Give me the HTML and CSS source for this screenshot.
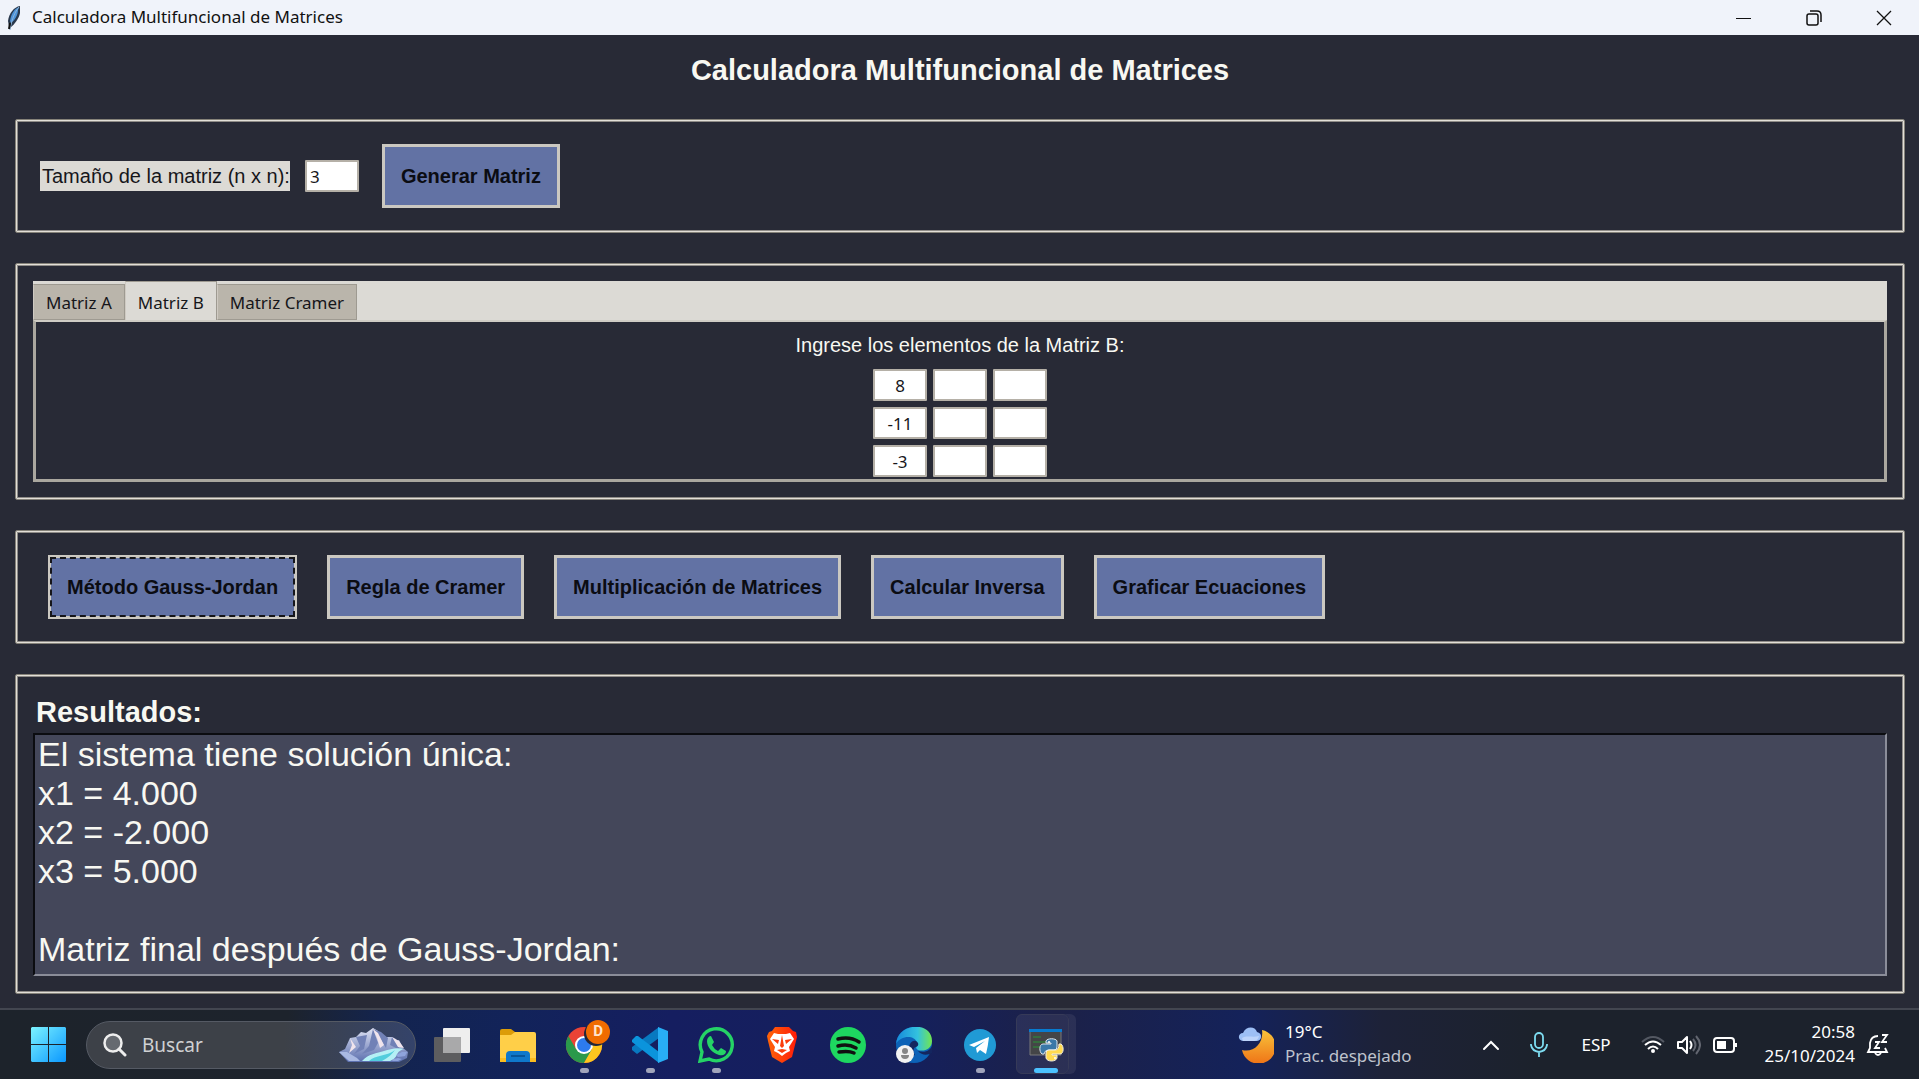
FILE: index.html
```html
<!DOCTYPE html>
<html lang="es">
<head>
<meta charset="utf-8">
<meta name="viewport" content="width=device-width, initial-scale=1">
<title>Calculadora Multifuncional de Matrices</title>
<link rel="stylesheet" href="styles.css">
</head>
<body>
<header class="titlebar">
  <svg class="feather" width="16" height="26" viewBox="0 0 16 26" aria-hidden="true">
    <path d="M14 1C8 2 3 8 2 16l1 5 2 1c4-3 8-9 9-14z" fill="#29384c"/>
    <path d="M13 2C8 4 5 9 4 16l1 2c4-3 7-8 7-13z" fill="#4d93d8"/>
    <path d="M13 2C9 7 6 13 4 25" stroke="#8fb4d8" stroke-width="1" fill="none"/>
    <path d="M4 18l-1 6" stroke="#111" stroke-width="2"/>
  </svg>
  <span class="titlebar-text">Calculadora Multifuncional de Matrices</span>
  <button class="window-control" aria-label="Minimizar"><svg width="16" height="16"><path d="M0 8.500h15" stroke="#111" /></svg></button>
  <button class="window-control" aria-label="Restaurar"><svg width="16" height="16" fill="none" stroke="#111" stroke-width="1.500"><rect x="1" y="4" width="11" height="11" rx="2"/><path d="M4 1h7q4 0 4 4v7"/></svg></button>
  <button class="window-control" aria-label="Cerrar"><svg width="16" height="16" fill="none" stroke="#111" stroke-width="1.300"><path d="M1 1l14 14M15 1L1 15"/></svg></button>
</header>

<main class="app">
  <h1 class="app-title">Calculadora Multifuncional de Matrices</h1>

  <form class="frame size-frame">
    <label class="size-label" for="size">Tamaño de la matriz (n x n):</label>
    <input class="entry size-entry" id="size" type="text" value="3">
    <button class="action" type="button">Generar Matriz</button>
  </form>

  <section class="frame matrix-frame">
    <div class="tabs" role="tablist">
      <button class="tab" role="tab" aria-selected="false">Matriz A</button>
      <button class="tab tab-active" role="tab" aria-selected="true">Matriz B</button>
      <button class="tab" role="tab" aria-selected="false">Matriz Cramer</button>
    </div>
    <div class="pane" role="tabpanel">
      <p class="pane-title">Ingrese los elementos de la Matriz B:</p>
      <div class="matrix">
        <input class="entry cell" type="text" aria-label="Fila 1, columna 1" value="8">
        <input class="entry cell" type="text" aria-label="Fila 1, columna 2">
        <input class="entry cell" type="text" aria-label="Fila 1, columna 3">
        <input class="entry cell" type="text" aria-label="Fila 2, columna 1" value="-11">
        <input class="entry cell" type="text" aria-label="Fila 2, columna 2">
        <input class="entry cell" type="text" aria-label="Fila 2, columna 3">
        <input class="entry cell" type="text" aria-label="Fila 3, columna 1" value="-3">
        <input class="entry cell" type="text" aria-label="Fila 3, columna 2">
        <input class="entry cell" type="text" aria-label="Fila 3, columna 3">
      </div>
    </div>
  </section>

  <section class="frame actions-frame">
    <button class="action action-focused">Método Gauss-Jordan</button>
    <button class="action">Regla de Cramer</button>
    <button class="action">Multiplicación de Matrices</button>
    <button class="action">Calcular Inversa</button>
    <button class="action">Graficar Ecuaciones</button>
  </section>

  <section class="frame results-frame">
    <label class="results-title" for="results">Resultados:</label>
    <textarea class="results" id="results" readonly>El sistema tiene solución única:
x1 = 4.000
x2 = -2.000
x3 = 5.000

Matriz final después de Gauss-Jordan:</textarea>
  </section>
</main>

<footer class="taskbar">
  <button class="task start" aria-label="Inicio">
    <svg width="36" height="36" viewBox="0 0 36 36"><defs><linearGradient id="win" x1="0" y1="0" x2="1" y2="1"><stop offset="0" stop-color="#7cf3ff"/><stop offset="1" stop-color="#0a97ff"/></linearGradient></defs><path d="M1 0h16v17H0V1zM18 0h16l1 1v16H18zM0 18h17v17H1l-1-1zM18 18h17v16l-1 1H18z" fill="url(#win)"/></svg>
  </button>
  <label class="search">
    <svg width="24" height="24" viewBox="0 0 24 24" fill="none" stroke="#eee" aria-hidden="true"><circle cx="10" cy="10" r="8.500" stroke-width="2.500" fill="#666a70"/><path d="M16 16l6 6" stroke-width="3" stroke-linecap="round"/></svg>
    <input class="search-input" type="text" placeholder="Buscar" aria-label="Buscar">
    <svg width="72" height="34" viewBox="0 0 72 34" aria-hidden="true">
      <defs><linearGradient id="peak" x1="0" y1="0" x2="0" y2="1"><stop offset="0" stop-color="#dfe3f4"/><stop offset="1" stop-color="#5b6fae"/></linearGradient></defs>
      <path d="M1 24l6-3 5-11 6-1 5-5 5 1 7-5 5 3 4 7 6-1 4 0 3 4 4-1 4 8 5 4-1 6-8 4H10z" fill="url(#peak)"/>
      <path d="M18 9l4 9-6 8 10-5 3-14zM35 1l-4 17-7 8 12-4 4-7zM35 1l8 11 5 8 2-10-7-6zM54 9l-2 8 10 5-4-11z" fill="#7181b6"/>
      <path d="M35 1l4 9 3 10 4-3-6-12zM12 10l2 7-3 8 7-6zM54 9l6 10 6 1-5-7z" fill="#f0e4ec"/>
      <path d="M1 24l8 0 10 6 3 3H11z" fill="#a9b9e2"/>
      <path d="M24 33c6-7 15-8 22-10 6-2 13-4 20-2-10 3-4 8-14 12z" fill="#b5f0f5"/>
      <path d="M31 33c6-6 19-5 26-11-3 4-7 8-13 11z" fill="#52cddd"/>
      <path d="M58 27l6-3 5 0-2 4-7 1zM55 31l5-1 4 1-4 2h-6z" fill="#8fa4dc"/>
    </svg>
  </label>
  <nav class="apps" aria-label="Aplicaciones">
    <button class="task" aria-label="Vista de tareas"><svg width="36" height="36"><rect x="9" y="1" width="27" height="25" rx="1" fill="#eee"/><rect x="0" y="10" width="27" height="25" rx="1" fill="#5d5d5f"/><path d="M9 10h18v16H9z" fill="#a9a9aa"/></svg></button>
    <button class="task" aria-label="Explorador de archivos"><svg width="36" height="36"><path d="M0 4q0-2 2-2h9l4 3v8H0z" fill="#dc9c08"/><path d="M0 8h11l4-3h19q2 0 2 2v28H0z" fill="#ffcf48"/><path d="M0 31h36v4H0z" fill="#fbbd20"/><path d="M6 35V28q0-4 4-4h16q4 0 4 4v7z" fill="#0f78cb"/><path d="M11 29h14" stroke="#07569b" stroke-width="2"/></svg></button>
    <button class="task running" aria-label="Google Chrome"><svg class="overflowing" width="36" height="36" viewBox="0 0 36 36"><circle cx="18" cy="18" r="18" fill="#ea4335"/><path d="M2.400 9A18 18 0 0 0 18 36l8-13-16-1z" fill="#2a994b"/><path d="M18 9h15.600A18 18 0 0 1 18 36l8-14z" fill="#fcc61f"/><circle cx="18" cy="18" r="9" fill="#fff"/><circle cx="18" cy="18" r="7" fill="#2d7bed"/><circle cx="30" cy="7" r="12" fill="#222638"/><circle cx="32" cy="5" r="12" fill="#f06c00"/></svg><span class="badge">D</span></button>
    <button class="task running" aria-label="Visual Studio Code"><svg width="36" height="36" viewBox="0 0 36 36"><path d="M27 0v11L5 27l-5-4v-3z" fill="#0879c0"/><path d="M0 13l4-4h2l21 16v11L0 15z" fill="#0b94dc"/><path d="M26 0l10 4v28l-10 4z" fill="#28aef5"/></svg></button>
    <button class="task running" aria-label="WhatsApp"><svg width="36" height="36" viewBox="0 0 36 36"><path d="M2 34l2-9A16 16 0 1 1 11 32z" fill="none" stroke="#25d366" stroke-width="3.400"/><path d="M13 9l3 6-2 3q2 4 6 6l3-3 5 3c0 4-4 5-7 4C14 26 9 20 9 14c0-3 2-5 4-5z" fill="#25d366"/></svg></button>
    <button class="task" aria-label="Brave"><svg width="32" height="36" viewBox="0 0 32 36"><defs><linearGradient id="brave"><stop stop-color="#ff6508"/><stop offset="1" stop-color="#ff1b09"/></linearGradient></defs><path d="M9 0h14l4 4 3 1 1 5-1 4-4 16-10 6-10-6L2 14 1 9l2-4 3-1z" fill="url(#brave)"/><path d="M8 6l4 1h8l4-1 4 6-5 8 1 4-4 2-4 3-4-3-4-2 1-4-5-8z" fill="#fff"/><path d="M6 12l7 1-1 4zM26 12l-7 1 1 4zM16 8l2 11-2 2-2-2zM11 23l5-1 5 1-5 3z" fill="#fb3d0b"/></svg></button>
    <button class="task" aria-label="Spotify"><svg width="36" height="36" viewBox="0 0 36 36"><circle cx="18" cy="18" r="18" fill="#1ed760"/><path d="M8 12c8-2 15-1 21 3M8 19c7-2 13-1 18 2M9 25c6-1 11-1 15 1" stroke="#111" stroke-width="3.500" stroke-linecap="round" fill="none"/></svg></button>
    <button class="task" aria-label="Microsoft Edge"><svg width="36" height="36" viewBox="0 0 36 36"><defs><linearGradient id="edge"><stop stop-color="#1689da"/><stop offset=".6" stop-color="#33c2df"/><stop offset="1" stop-color="#72e64f"/></linearGradient></defs><circle cx="18" cy="18" r="18" fill="#0c62b7"/><path d="M0 17C2-5 36-6 36 14c0 8-8 11-14 9-4-2 0-4-1-7C19 8 5 8 0 17z" fill="url(#edge)"/><path d="M22 16c-3-5-9-1-9 5 0 6 3 8 6 7-3-4-1-8 1-8q3-1 2-4zM36 16c1 5-5 11-14 8 4 5 10 4 14 2z" fill="#14265f"/><circle cx="9" cy="27" r="9" fill="#f2f2f2"/><circle cx="9" cy="24" r="3" fill="#858585"/><path d="M5 28h8q0 4-4 4t-4-4z" fill="#858585"/></svg></button>
    <button class="task running" aria-label="Telegram"><svg width="32" height="32" viewBox="0 0 32 32"><circle cx="16" cy="16" r="16" fill="#209ad5"/><path d="M5 16l20-8q-1 9-3 17l-6-4-3 3-1-5 9-7-11 6z" fill="#fff"/></svg></button>
    <button class="task task-active" aria-label="Python"><svg width="36" height="36" viewBox="0 0 36 36"><path d="M2 3h31v25H2z" fill="#444547" stroke="#78797b"/><path d="M1 2h33v3H1z" fill="#087bd0"/><path d="M5 10h8M5 15h13M5 20h7" stroke="#299536"/><path d="M16 27h-2c-3-2-3-10 1-10h8v-1h-5v-2c1-3 10-3 11 0v6q0 3-3 3h-6q-3 0-4 4z" fill="#3b78a8" stroke="#dce6ee"/><path d="M31 17h2c3 2 3 10-1 10h-8v1h5v3c-1 4-10 4-11 0v-5q0-3 3-3h6q4 0 4-6z" fill="#ffda50" stroke="#f2efe0"/><circle cx="21" cy="15" r="1" fill="#fff"/><circle cx="27" cy="31" r="1" fill="#fff"/></svg></button>
  </nav>

  <button class="weather">
    <svg width="36" height="36" viewBox="0 0 36 36" aria-hidden="true"><defs><linearGradient id="moon" x1="0" y1="0" x2="0" y2="1"><stop stop-color="#f8c43b"/><stop offset="1" stop-color="#ef7417"/></linearGradient></defs><path d="M24 3A17 17 0 1 1 4 23C16 26 26 16 24 3z" fill="url(#moon)"/><path d="M5 14C-1 13 0 6 5 6c3-7 12-7 14-1 6 1 5 9 0 9z" fill="#9dbff5"/><path d="M4 11c5-3 11 0 17-2-1 4-3 5-6 5H5z" fill="#bdd4fb"/></svg>
    <span class="two-lines"><span>19°C</span><span class="dim">Prac. despejado</span></span>
  </button>
  <div class="tray">
    <button class="tray-button" aria-label="Mostrar iconos ocultos"><svg width="18" height="12"><path d="M2 10l7-7 7 7" fill="none" stroke="#fff" stroke-width="2" stroke-linecap="round"/></svg></button>
    <button class="tray-button" aria-label="Micrófono"><svg width="18" height="26" fill="none" stroke="#7ddcf0" stroke-width="1.800"><rect x="5" y="1" width="8" height="15" rx="4"/><path d="M1 12v1q1 6 8 7 7-1 8-7v-1M9 20v5"/></svg></button>
    <button class="tray-button language">ESP</button>
    <button class="tray-button status" aria-label="Red, volumen y batería">
      <svg width="24" height="24" fill="none" stroke="#fff" stroke-width="2"><path d="M1 9q11-10 22 0" stroke="#535862"/><path d="M4 12q8-7 16 0M7 16q5-5 10 0"/><circle cx="12" cy="18" r="1"/></svg>
      <svg width="24" height="24" fill="none" stroke="#fff" stroke-width="2"><path d="M1 9h4l5-5v16l-5-5H1z" stroke-linejoin="round"/><path d="M13 8q3 4 0 8"/><path d="M16 6q5 6 0 12M19 3q8 9 0 18" stroke="#626670"/></svg>
      <svg width="24" height="24" fill="none" stroke="#fff" stroke-width="2"><rect x="1" y="5" width="20" height="14" rx="3"/><path d="M4 8h9v8H4z" fill="#fff" stroke="none"/><path d="M23 10v4"/></svg>
    </button>
    <button class="clock two-lines"><span>20:58</span><span>25/10/2024</span></button>
    <button class="tray-button bell" aria-label="Notificaciones"><svg width="24" height="24" viewBox="0 0 24 24" fill="none" stroke="#fff" stroke-width="1.800"><path d="M12 3Q5 3 4 10v5l-2 4h19l-2-4M9 20q3 4 6 0M9 9h4l-4 6h5M16 2h5l-5 7h5"/></svg></button>
  </div>
</footer>
</body>
</html>
```

FILE: styles.css
```css
* { box-sizing: border-box; }

body {
  margin: 0;
  min-height: 100vh;
  display: flex;
  flex-direction: column;
  background: #282a36;
  color: #f8f8f2;
  font-family: "Liberation Sans", Arial, sans-serif;
}

button, input, textarea { font: inherit; color: inherit; margin: 0; }
button { background: none; border: 0; padding: 0; }
svg { display: block; flex: none; }

/* Window title bar */
.titlebar {
  display: flex;
  align-items: center;
  height: 35px;
  padding-left: 6px;
  background: #f0f3fa;
  color: #111;
  font: 17px/24px "Noto Sans", sans-serif;
}
.titlebar-text { flex: 1; padding: 0 0 2px 10px; }
.window-control {
  display: grid;
  place-items: center;
  width: 70px;
  height: 35px;
}

/* Application */
.app {
  flex: 1;
  display: flex;
  flex-direction: column;
  gap: 30px;
  padding: 18px 14px 14px 15px;
}
.app-title {
  margin: 0;
  padding-bottom: 2px;
  font-size: 29px;
  line-height: 34px;
  text-align: center;
}
.frame {
  border: 1px solid #858279;
  border-radius: 2px;
  box-shadow: inset 0 0 0 1px #e2dfd8, inset 0 0 0 2px #8f8c88;
}

.size-frame, .actions-frame {
  display: flex;
  align-items: center;
  padding: 24px;
}
.size-label {
  padding: 0 0 0 2px;
  background: #dcdad5;
  color: #16161a;
  font-size: 20px;
  line-height: 30px;
}
.entry {
  width: 54px;
  height: 32px;
  padding: 0 3px;
  border: 2px solid #b5b0a7;
  border-radius: 1px;
  background: #fff;
  color: #16161a;
  font: 17px/24px "Noto Sans", sans-serif;
}
.size-entry { margin: 0 23px 0 15px; }
.action {
  height: 64px;
  padding: 0 16px;
  border: 3px solid #cbc8c1;
  background: #6272a4;
  color: #0b0c12;
  font-size: 20px;
  font-weight: bold;
}
.actions-frame { gap: 30px; padding-left: 32px; }
.action-focused { outline: 2px dashed #16161a; outline-offset: -4px; }

/* Notebook */
.matrix-frame { padding: 17px; }
.tabs {
  display: flex;
  align-items: flex-end;
  height: 39px;
  background: #dcdad5;
}
.tab {
  height: 36px;
  padding: 2px 12px 0;
  border: 1px solid #9e9a91;
  border-left-color: #cfcac2;
  background: #bab5ab;
  color: #16161a;
  font: 17px/24px "Noto Sans", sans-serif;
}
.tab-active {
  height: 39px;
  padding-top: 4px;
  background: #dcdad5;
  border-bottom: 0;
}
.pane {
  padding: 10px 0 2px;
  border: 3px solid #aaa79f;
  border-top: 2px solid #cfccc5;
}
.pane-title {
  margin: 0 0 11px;
  font-size: 20px;
  line-height: 26px;
  text-align: center;
}
.matrix {
  display: grid;
  grid-template-columns: repeat(3, 54px);
  justify-content: center;
  gap: 6px;
}
.cell { text-align: center; }

/* Results */
.results-frame {
  flex: 1;
  display: flex;
  flex-direction: column;
  padding: 18px 17px 17px;
}
.results-title {
  padding: 0 0 2px 3px;
  font-size: 29px;
  font-weight: bold;
  line-height: 38px;
}
.results {
  flex: 1;
  width: 100%;
  min-height: 243px;
  padding: 0 3px;
  border: 2px solid;
  border-color: #0b0c10 #8b8d99 #8b8d99 #0b0c10;
  background: #44475a;
  font-size: 34px;
  line-height: 39px;
  resize: none;
  overflow: hidden;
  outline: none;
}

/* Taskbar */
.taskbar {
  display: flex;
  align-items: stretch;
  height: 71px;
  padding-left: 16px;
  border-top: 2px solid #434650;
  background: linear-gradient(90deg, #1d232b 0, #1d232c 15%, #13244f 20%, #12235a 27%, #151e60 35%, #15205b 48%, #1c2148 55%, #14225a 65%, #1d2238 72%, #1c222c 80%);
  color: #fff;
  font: 17px/24px "Noto Sans", sans-serif;
}
.task {
  position: relative;
  display: grid;
  place-items: center;
  width: 66px;
}
.search {
  display: flex;
  align-items: center;
  align-self: center;
  width: 330px;
  height: 48px;
  margin: 0 3px 0 4px;
  padding: 0 5px 0 16px;
  border: 1px solid #555a64;
  border-radius: 24px;
  background: linear-gradient(90deg, #3d4148 60%, #34436a);
}
.search-input {
  flex: 1;
  min-width: 0;
  padding: 0 0 0 15px;
  border: 0;
  background: none;
  font-size: 19px;
}
.search-input::placeholder { color: #d0d1d3; opacity: 1; }
.apps { display: flex; }
.overflowing { overflow: visible; }
.badge {
  position: absolute;
  top: 9px;
  right: 7px;
  width: 24px;
  color: #ffe3cb;
  font: bold 15px/24px Roboto, sans-serif;
}
.running::after, .task-active::after {
  content: "";
  position: absolute;
  bottom: 6px;
  left: 29px;
  width: 9px;
  height: 5px;
  border-radius: 3px;
  background: #a0a4bb;
}
.task-active { isolation: isolate; }
.task-active::before {
  content: "";
  position: absolute;
  z-index: -1;
  inset: 4px 10px 5px 3px;
  border: 1px solid #363a58;
  border-radius: 6px;
  background: #ffffff12;
  box-shadow: 7px 0 0 0 #ffffff12;
}
.task-active::after { left: 21px; width: 24px; background: #4cc2ff; }

.weather {
  display: flex;
  align-items: center;
  gap: 11px;
  width: 229px;
  margin-left: auto;
  text-align: left;
}
.two-lines {
  display: flex;
  flex-direction: column;
  justify-content: center;
  padding-bottom: 2px;
}
.dim { color: #bfc2cc; }
.tray { display: flex; width: 452px; }
.tray-button {
  display: grid;
  place-items: center;
  width: 48px;
}
.language { width: 66px; }
.status { display: flex; align-items: center; justify-content: center; gap: 12px; width: 120px; }
.clock { flex: 1; align-items: flex-end; }
.bell { width: 64px; padding-right: 18px; }
```
